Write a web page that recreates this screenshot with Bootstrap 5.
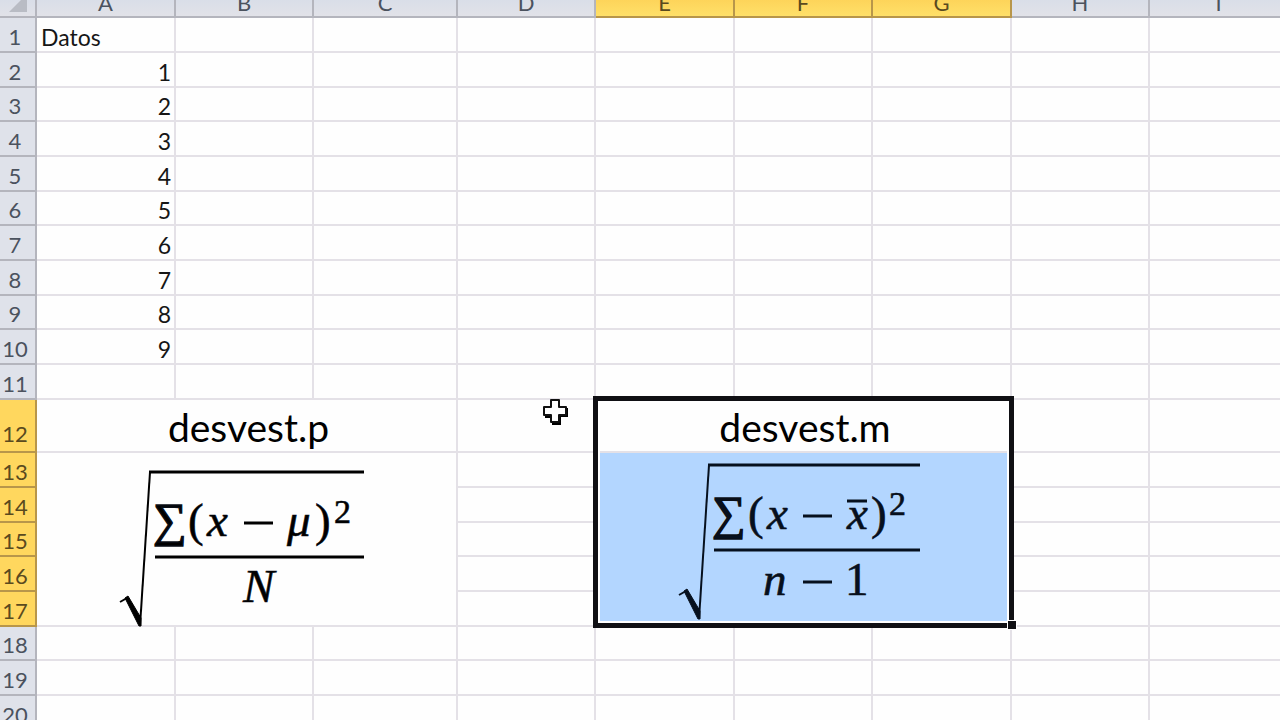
<!DOCTYPE html>
<html lang="es">
<head>
<meta charset="utf-8">
<meta name="viewport" content="width=device-width, initial-scale=1">
<title>Desviación estándar</title>
<link href="https://cdn.jsdelivr.net/npm/bootstrap@5.3.0/dist/css/bootstrap.min.css" rel="stylesheet">
<style>
  body { font-family: Lato, "Open Sans", sans-serif; color: #161616; background: #fefefe; }
  .sheet { table-layout: fixed; width: 0; border-collapse: separate; border-spacing: 0; font-size: 23px; line-height: 24px; }
  .sheet col { width: 138px; }
  .sheet col.rowhead { width: 37px; }
  .sheet col.wide { width: 144px; }
  .sheet col.odd { width: 139px; }
  .sheet th, .sheet td { padding: 0 3px 2px 4px; border: 0 solid #e4e1e7; border-width: 0 2px 2px 0; vertical-align: bottom; white-space: nowrap; }
  .sheet th { font-size: 22px; font-weight: 400; color: #4b525e; background: #dfe2ea; border-color: #b4b5bd; text-align: center; }
  .sheet thead th { padding: 0; background: linear-gradient(#d9dee8, #e1e2e8); }
  .sheet thead th > div { height: 16px; }
  .sheet thead span { line-height: 26px; }
  .sheet tbody th { padding: 0 5px 2px 0; }
  .sheet th.picked { background: #ffd75e; border-color: #b8964a; color: #5a4a1e; }
  .sheet thead th.picked { background: linear-gradient(#fdd45a, #ffe069); }
  .sheet tbody tr { height: 35px; }
  .sheet tbody tr:nth-child(3n) { height: 34px; }
  .sheet tbody tr.tall { height: 53px; }
  .sheet .tall th { padding-bottom: 5px; }
  .sheet .title-cell { font-size: 39px; line-height: 44px; color: #000; padding: 0 0 2px 4px; }
  .sheet .formula { padding: 0; vertical-align: top; }
  .sheet .tinted { background: #b3d6ff; }
  .formula svg { height: 171px; width: 414px; overflow: visible; }
  .formula text { font-family: "Liberation Serif", serif; font-size: 47px; stroke: #0a0e16; stroke-width: .6px; }
  .formula .sup { font-size: 34px; }
  .formula .sum { stroke-width: 1.5px; }
  .selection { left: -3px; right: -4px; top: -4px; height: 232px; border: 5px solid #101014; box-shadow: inset 0 0 0 2px #fff; pointer-events: none; z-index: 2; }
  .grip { right: -8px; bottom: -7px; width: 10px; height: 10px; background: #101014; border: 1px solid #fff; }
  .pointer { left: 84px; top: -2px; }
</style>
</head>
<body>
<main class="vh-100 overflow-hidden">
  <table class="sheet" id="sheet">
    <colgroup id="cols"><col class="rowhead"></colgroup>
    <thead><tr id="letters">
      <th aria-label="Seleccionar todo"><div class="d-flex justify-content-end pe-2"><svg width="18" height="12" aria-hidden="true"><path d="M18 -6V12H0Z" fill="#b9bcc4"/></svg></div></th>
    </tr></thead>
    <tbody id="rows"></tbody>
  </table>
</main>

<template id="pointer">
  <svg class="pointer position-absolute" width="28" height="28" viewBox="0 0 28 28" aria-hidden="true">
    <path d="M10 3h8v7h8v9h-7v8h-9v-7H3v-9h7z" fill="#000"/>
    <path d="M9 2h8v7h7v8h-7v7H9v-7H2V9h7z" fill="#fff" stroke="#111" stroke-width="2" stroke-linejoin="round"/>
  </svg>
</template>
<template id="selection">
  <div class="selection position-absolute"><span class="grip position-absolute"></span></div>
</template>
<template id="population">
  <svg class="d-block" viewBox="0 0 414 171" role="img" aria-label="Raíz de la suma de (x menos mu) al cuadrado entre N">
    <g fill="none" stroke="#000">
      <path d="M83 149L90 145" stroke-width="2"/><path d="M88 145L91 143L104 165L104 173H102Z" fill="#000" stroke-width="1"/>
      <path d="M103 173L113 19" stroke-width="2"/><path d="M112 19H327M118 104H327" stroke-width="3"/>
      <path d="M207 70H236" stroke-width="3"/>
    </g>
    <text y="84"><tspan class="sum" x="116" y="83">∑</tspan><tspan x="151">(</tspan><tspan x="170" font-style="italic">x</tspan><tspan x="250" font-style="italic">μ</tspan><tspan x="278">)</tspan></text>
    <text class="sup" x="297" y="70">2</text>
    <text x="206" y="149" font-style="italic">N</text>
  </svg>
</template>
<template id="sample">
  <svg class="d-block" viewBox="0 7 414 171" role="img" aria-label="Raíz de la suma de (x menos x media) al cuadrado entre n menos 1">
    <g fill="none" stroke="#06101e">
      <path d="M83 149L90 145" stroke-width="2"/><path d="M88 145L91 143L104 165L104 173H102Z" fill="#06101e" stroke-width="1"/>
      <path d="M103 173L113 19" stroke-width="2"/><path d="M112 19H324M118 104H324" stroke-width="3"/>
      <path d="M207 70H236M251 55H271M207 136H236" stroke-width="3"/>
    </g>
    <g fill="#06101e">
      <text y="84"><tspan class="sum" x="116" y="83">∑</tspan><tspan x="152">(</tspan><tspan x="171" font-style="italic">x</tspan><tspan x="251" font-style="italic">x</tspan><tspan x="275">)</tspan></text>
      <text class="sup" x="293" y="69">2</text>
      <text y="149"><tspan x="167" font-style="italic">n</tspan><tspan x="249">1</tspan></text>
    </g>
  </svg>
</template>

<script src="https://cdn.jsdelivr.net/npm/bootstrap@5.3.0/dist/js/bootstrap.bundle.min.js"></script>
<script>
  const letters = 'ABCDEFGHIJKLMN';
  const part = id => document.getElementById(id).innerHTML;
  const cols = document.getElementById('cols');
  const head = document.getElementById('letters');
  const body = document.getElementById('rows');

  for (const c of letters) {
    const size = c === 'C' ? 'wide' : 'AEGI'.includes(c) ? 'odd' : '';
    cols.insertAdjacentHTML('beforeend', `<col class="${size}">`);
    head.insertAdjacentHTML('beforeend',
      `<th scope="col" class="${'EFG'.includes(c) ? 'picked' : ''}"><div class="d-flex justify-content-center align-items-end overflow-hidden"><span>${c}</span></div></th>`);
  }

  // Cells that hold something; A:C and E:G are merged from row 12 down to row 17
  const cells = {
    A1: '<td>Datos</td>',
    A12: '<td colspan="3" class="title-cell text-center">desvest.p</td>',
    D12: `<td class="position-relative">${part('pointer')}</td>`,
    E12: `<td colspan="3" class="title-cell text-center position-relative">desvest.m${part('selection')}</td>`,
    A13: `<td colspan="3" rowspan="5" class="formula">${part('population')}</td>`,
    E13: `<td colspan="3" rowspan="5" class="formula tinted">${part('sample')}</td>`
  };
  for (let n = 1; n <= 9; n++) cells['A' + (n + 1)] = `<td class="text-end">${n}</td>`;

  for (let r = 1; r <= 32; r++) {
    const merged = r >= 12 && r <= 17;
    let html = `<tr class="${r === 12 ? 'tall' : ''}"><th scope="row" class="${merged ? 'picked' : ''}">${r}</th>`;
    for (const c of letters) {
      if (cells[c + r]) html += cells[c + r];
      else if (!(merged && 'ABCEFG'.includes(c))) html += '<td></td>';
    }
    body.insertAdjacentHTML('beforeend', html + '</tr>');
  }
</script>
</body>
</html>
